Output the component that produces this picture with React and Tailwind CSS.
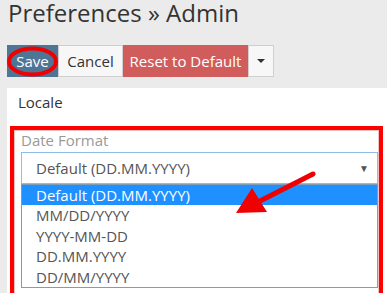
import React from "react";

const formats = [
  "Default (DD.MM.YYYY)",
  "MM/DD/YYYY",
  "YYYY-MM-DD",
  "DD.MM.YYYY",
  "DD/MM/YYYY",
];

export default function App() {
  return (
    <div
      className="relative w-[387px] h-[293px] overflow-hidden bg-[#ebebeb] text-[#333]"
      style={{ fontFamily: '"Open Sans", "Liberation Sans", sans-serif' }}
    >
      <h1 className="pl-[8px] text-[24px] leading-[26px] text-[#333]">
        Preferences » Admin
      </h1>

      {/* toolbar */}
      <div className="flex mt-[19px] ml-[7px] h-[32px] text-[15px]">
        <button className="relative w-[51px] bg-[#4e7596] text-white">
          Save
          <svg
            className="absolute left-0 top-0"
            width="51"
            height="32"
            viewBox="0 0 51 32"
          >
            <ellipse
              cx="25.5"
              cy="16.5"
              rx="23.5"
              ry="13"
              fill="none"
              stroke="#f00000"
              strokeWidth="4"
            />
          </svg>
        </button>
        <button className="w-[65px] bg-[#f7f7f7] border border-[#cfcfcf] text-[#333]">
          Cancel
        </button>
        <button className="w-[125px] bg-[#d05c5c] text-white">
          Reset to Default
        </button>
        <button className="w-[26px] flex items-center justify-center bg-[#f7f7f7] border border-[#cfcfcf]">
          <span className="w-0 h-0 border-l-[4px] border-r-[4px] border-t-[4px] border-l-transparent border-r-transparent border-t-[#333]" />
        </button>
      </div>

      {/* panel */}
      <div className="ml-[7px] mt-[11px] h-[220px] bg-white">
        <div className="pl-[11px] pt-[4px] h-[38px] text-[15px] leading-[20px] text-[#333]">Locale</div>

        <div className="ml-[3px] mr-[4px] border-[4px] border-[#ff0000] h-[200px]">
          <div className="h-full border border-[#f3c0c0] pl-[6px]">
            <div className="text-[15px] leading-[18px] text-[#999]">Date Format</div>
            <div className="relative mt-[3px]">
              <div className="flex items-center h-[32px] border border-[#8ebde8] pl-[14px] pr-[8px] text-[15px] text-[#555]">
                <span className="flex-1">Default (DD.MM.YYYY)</span>
                <span className="text-[10px] text-[#555]">▼</span>
              </div>
              <ul className="absolute left-0 right-0 top-[32px] border border-[#7f9db9] bg-white text-[15px] text-[#555]">
                {formats.map((f, i) => (
                  <li
                    key={f}
                    className={
                      i === 0
                        ? "h-[20.4px] leading-[20px] pl-[14px] bg-[#1e90ff] text-white"
                        : "h-[20.4px] leading-[20px] pl-[14px]"
                    }
                  >
                    {f}
                  </li>
                ))}
              </ul>
            </div>
          </div>
        </div>
      </div>

      {/* annotation arrow */}
      <svg
        className="absolute left-0 top-0 pointer-events-none"
        width="387"
        height="293"
        viewBox="0 0 387 293"
      >
        <line x1="313" y1="174" x2="258" y2="202" stroke="#f00000" strokeWidth="5" strokeLinecap="round" />
        <polygon points="236,213 252,188 267,212" fill="#f00000" />
      </svg>
    </div>
  );
}
